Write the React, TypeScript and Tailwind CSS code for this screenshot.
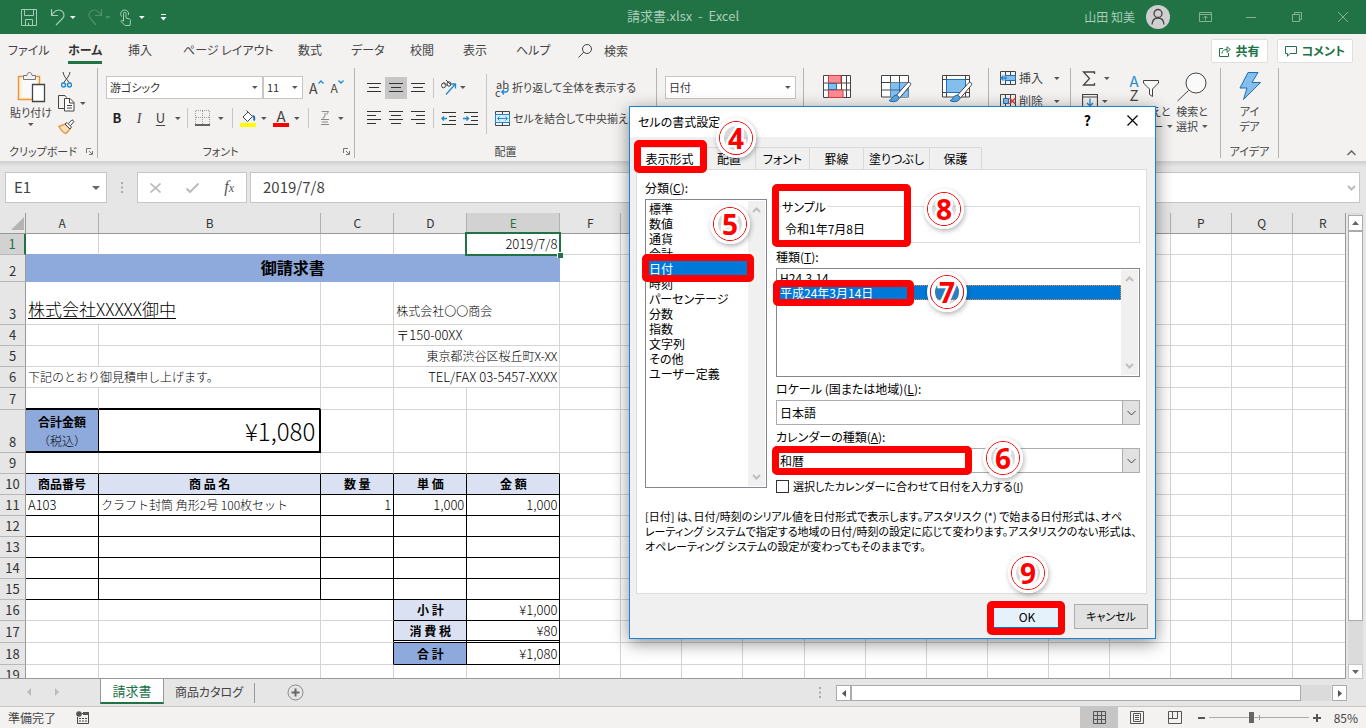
import { useState, type ReactNode } from 'react'
import clsx from 'clsx'

const MENU = [
  { label: 'ファイル', width: 'w-[60px]' },
  { label: 'ホーム', width: 'w-[60px]' },
  { label: '挿入', width: 'w-[55px]' },
  { label: 'ページ レイアウト', width: 'w-[115px]' },
  { label: '数式', width: 'w-[53px]' },
  { label: 'データ', width: 'w-[59px]' },
  { label: '校閲', width: 'w-[53px]' },
  { label: '表示', width: 'w-[53px]' },
  { label: 'ヘルプ', width: 'w-[62px]' },
]

const CATEGORIES = ['標準', '数値', '通貨', '会計', '日付', '時刻', 'パーセンテージ', '分数', '指数', '文字列', 'その他', 'ユーザー定義']

const DIALOG_TABS = [
  { label: '表示形式', width: 'w-[67px]' },
  { label: '配置', width: 'w-[53px]' },
  { label: 'フォント', width: 'w-[54px]' },
  { label: '罫線', width: 'w-[54px]' },
  { label: '塗りつぶし', width: 'w-[66px]' },
  { label: '保護', width: 'w-[52px]' },
]

function Icon({ w, h, children, className }: { w: number; h: number; children: ReactNode; className?: string }) {
  return (
    <svg width={w} height={h} viewBox={`0 0 ${w} ${h}`} fill="none" stroke="#444" aria-hidden="true" className={clsx('shrink-0', className)}>
      {children}
    </svg>
  )
}

function Caret({ className = 'text-[#555]' }: { className?: string }) {
  return (
    <Icon w={6} h={3} className={className}>
      <path d="M0 0h5.6L2.8 3z" fill="currentColor" stroke="none" />
    </Icon>
  )
}

/* ---------- Title bar ---------- */

function TitleBar() {
  return (
    <header className="grid h-[34px] shrink-0 grid-cols-[1fr_auto_1fr] items-center bg-[#217346] text-[13px] text-[#a9cdb8]">
      <div className="flex items-center pl-[21px]">
        <button aria-label="上書き保存">
          <Icon w={16} h={17}>
            <path d="M.5.5h15v16h-15zM3.5.5v6h9v-6M4.5 16.500v-6h7v6M7.500 16.500v-3" stroke="#a5cdb5" />
          </Icon>
        </button>
        <button aria-label="元に戻す" className="ml-[13px] flex items-center gap-1">
          <Icon w={16} h={18}>
            <path d="M1.500 1v6.500h6.500M1.500 7.500C4 3 8 1 11 2.500c4 2 3.500 6 1.500 8L6 17" stroke="#a5cdb5" strokeWidth="1.200" />
          </Icon>
          <Caret className="text-white" />
        </button>
        <button aria-label="やり直し" className="ml-[11px] flex items-center gap-[2px]">
          <Icon w={16} h={18}>
            <path d="M14.500 1v6.500H8M14.500 7.500C12 3 8 1 5 2.500 1 4.500 1.500 8.500 3.500 10.500L9 17" stroke="#4c9068" strokeWidth="1.200" />
          </Icon>
          <Caret className="text-[#4c9068]" />
        </button>
        <button aria-label="タッチ/マウス モード" className="ml-2 flex items-center gap-2">
          <Icon w={12} h={17}>
            <path d="M4.500 12V4.500a1.200 1.200 0 0 1 2.500 0V9l3.500 1c1 .3 1 1 1 2l-.5 4.500H6L2 12.500c-.5-1 .8-1.800 2.500 0M2.500 7.500A4 4 0 1 1 9.500 6" stroke="#a5cdb5" />
          </Icon>
          <Caret className="text-white" />
        </button>
        <button aria-label="クイック アクセス ツール バーのカスタマイズ" className="ml-[15px]">
          <Icon w={7} h={7}>
            <path d="M1 .5h5" stroke="#fff" />
            <path d="M.5 3h6l-3 3.500z" fill="#fff" stroke="none" />
          </Icon>
        </button>
      </div>
      <h1 className="whitespace-pre pb-[3px]">請求書.xlsx  -  Excel</h1>
      <div className="flex items-center justify-end pr-[18px]">
        <span className="mr-[11px] text-[12px]">山田 知美</span>
        <span className="mr-[29px] flex size-6 items-center justify-center rounded-full bg-[#cfcfcf]">
          <Icon w={16} h={18}>
            <circle cx="8" cy="5.500" r="4" strokeWidth="1.300" />
            <path d="M2 16.500c.3-4.500 3-6.500 6-6.500s5.700 2 6 6.500" strokeWidth="1.300" />
          </Icon>
        </span>
        <button aria-label="リボンの表示オプション" className="mr-[34px]">
          <Icon w={13} h={10}>
            <path d="M.5.5h12v9H.5zM.5 2.500h12M6.500 8.500V4M4.500 6l2-2 2 2" stroke="#7fb394" />
          </Icon>
        </button>
        <button aria-label="最小化" className="mr-9">
          <Icon w={10} h={10}>
            <path d="M0 5.500h10" stroke="#7fb394" />
          </Icon>
        </button>
        <button aria-label="元のサイズに戻す" className="mr-9">
          <Icon w={10} h={10}>
            <path d="M.5 2.500h7v7h-7zM2.500 2.500v-2h7v7h-2" stroke="#7fb394" />
          </Icon>
        </button>
        <button aria-label="閉じる">
          <Icon w={10} h={10}>
            <path d="M0 0l10 10M10 0L0 10" stroke="#7fb394" />
          </Icon>
        </button>
      </div>
    </header>
  )
}

function MenuBar() {
  return (
    <nav className="flex h-[34px] shrink-0 items-center bg-[#f3f2f1] pl-2 text-[12px] text-[#444]">
      {MENU.map(({ label, width }) => (
        <button key={label} className={clsx('flex h-[30px] shrink-0 items-center', width)}>
          <span className={clsx('flex h-[26px] items-center border-b-3 whitespace-nowrap', label === 'ホーム' ? 'border-[#217346] font-bold text-[#333]' : 'border-transparent')}>
            {label}
          </span>
        </button>
      ))}
      <button className="flex items-center gap-3 whitespace-nowrap">
        <Icon w={14} h={14}>
          <circle cx="9" cy="5" r="4.500" />
          <path d="M5.700 8.200L.5 13.500" />
        </Icon>
        検索
      </button>
      <div className="mr-[13px] ml-auto flex gap-[9px] font-bold text-[#217346]">
        <button className="flex h-6 items-center gap-[5px] rounded-xs border border-[#e1dfdd] bg-white px-[7px]">
          <Icon w={12} h={11}>
            <path d="M4 2.500H.5v8h9V7M3 7.500C3 4.500 5 3.500 8 3.500M8 .8v5.500l3.300-2.800z" stroke="#217346" />
          </Icon>
          共有
        </button>
        <button className="flex h-6 items-center gap-[5px] rounded-xs border border-[#e1dfdd] bg-white px-[7px]">
          <Icon w={12} h={11}>
            <path d="M.5.5h11v7H5l-2.500 2.800V7.500h-2z" stroke="#217346" />
          </Icon>
          コメント
        </button>
      </div>
    </nav>
  )
}

/* ---------- Ribbon ---------- */

function Group({ label, width, launcher, children }: { label: string; width: string; launcher?: boolean; children: ReactNode }) {
  return (
    <section className={clsx('flex h-[90px] shrink-0 flex-col border-r border-[#b5b3b1]', width)}>
      <div className="flex h-[77px]">{children}</div>
      <div className="flex h-[13px] items-center justify-center leading-[13px]">
        <span className="flex-1 text-center whitespace-nowrap">{label}</span>
        {launcher && (
          <button aria-label={`${label}の設定`} className="mr-1">
            <Icon w={7} h={7}>
              <path d="M.5 5V.5H5M3 3l3 3M6.500 3v3.500H3" stroke="#777" />
            </Icon>
          </button>
        )}
      </div>
    </section>
  )
}

function Divider({ className = 'h-5' }: { className?: string }) {
  return <span className={clsx('w-px shrink-0 bg-[#c8c6c4]', className)} />
}

function Lines({ rows, label, active }: { rows: [number, number][]; label: string; active?: boolean }) {
  return (
    <button aria-label={label} className={clsx('flex h-[22px] w-[22px] items-center justify-center', active && 'bg-[#c6c6c6]')}>
      <Icon w={14} h={14}>
        {rows.map(([x, len], i) => (
          <path key={i} d={`M${x} ${i * 4 + (rows.length === 3 ? 2.5 : 0.5)}h${len}`} stroke="#333" />
        ))}
      </Icon>
    </button>
  )
}

function Combo({ label, value, width }: { label: string; value: string; width: string }) {
  return (
    <span className={clsx('relative flex h-[23px] items-center border border-[#c8c6c4] bg-white', width)}>
      <select aria-label={label} className="h-full w-full appearance-none pl-[3px] text-[#333] outline-none">
        <option>{value}</option>
      </select>
      <Caret className="pointer-events-none absolute right-1 text-[#555]" />
    </span>
  )
}

function Indent({ out }: { out?: boolean }) {
  return (
    <Icon w={15} h={13}>
      <path d="M1 .5h14M8 4.500h7M8 8.500h7M1 12.500h14" stroke="#333" />
      <path d={out ? 'M6 6.500H1M3 4.500l-2 2 2 2' : 'M0 6.500h5M3.500 4.500l2 2-2 2'} stroke="#1f8ad2" strokeWidth="1.400" />
    </Icon>
  )
}

function Brush() {
  return (
    <>
      <path d="M28.500 7.500c1.500.3 1.500 1.800.5 3.200L18.500 23l-3-2.800L26 8.500c1-1 1.800-1.300 2.500-1z" fill="#fff" />
      <path d="M8 25.500c3-.3 3-5 7-5.500 3 1 4 3.500 1.500 5.500-2.500 1.800-6.500 1.500-8.500 0z" fill="#5aa7e0" stroke="#1f6fb5" />
    </>
  )
}

function Ribbon() {
  return (
    <div className="flex h-[93px] shrink-0 bg-[#f3f2f1] text-[11px] text-[#444]">
      <Group label="クリップボード" width="w-[98px]" launcher>
        <button className="flex w-[58px] flex-col items-center pt-1 pl-1">
          <Icon w={29} h={31}>
            <path d="M1.500 4.500h21v23h-21z" fill="#faf0d8" stroke="#e9963c" strokeWidth="1.500" />
            <path d="M5 5h15v20H5z" fill="#fafafa" stroke="none" />
            <path d="M6.500 7.500v-4h3.500c.3-2 1-3 2.500-3s2.200 1 2.500 3h3.500v4z" fill="#f3f2f1" stroke="#777" />
            <path d="M15.500 12.500h12v17h-12z" fill="#fff" stroke="#444" strokeWidth="1.300" />
          </Icon>
          <span className="mt-[2px] leading-[14px] whitespace-nowrap">貼り付け</span>
          <span className="mt-1"><Caret /></span>
        </button>
        <div className="flex flex-col items-start gap-[7px] pt-1">
          <button aria-label="切り取り" className="pl-[3px]">
            <Icon w={11} h={16}>
              <path d="M2 0c.5 4 3 6 6.500 11M9 0C8.500 4 6 6 2.500 11" />
              <circle cx="2.500" cy="13" r="2" stroke="#1f8ad2" strokeWidth="1.400" />
              <circle cx="8.500" cy="13" r="2" stroke="#1f8ad2" strokeWidth="1.400" />
            </Icon>
          </button>
          <button aria-label="コピー" className="flex items-center gap-[5px]">
            <Icon w={17} h={17}>
              <path d="M6 13.500H.5V.5H7l1.500 2" />
              <path d="M6.500 3.500h5.500l4 4v8.500H6.500z" fill="#fff" />
              <path d="M11.500 3.500V8H16M9 10.500h5M9 13h5" />
            </Icon>
            <Caret />
          </button>
          <button aria-label="書式のコピー/貼り付け">
            <Icon w={17} h={15}>
              <path d="M1 7.500l6-2.500 5 5-4 4.500c-2-.5-5-3-7-7z" fill="#fbe0c0" stroke="#e9963c" strokeWidth="1.400" />
              <path d="M7 5l2-1.500 4.500 4.500L12 10zM10.500 4.500L14 .8l2 1.700-3.500 4" fill="#fff" />
            </Icon>
          </button>
        </div>
      </Group>

      <Group label="フォント" width="w-[257px]" launcher>
        <div className="flex flex-col pt-2 pl-2">
          <div className="flex items-center">
            <Combo label="フォント" value="游ゴシック" width="w-[157px]" />
            <Combo label="フォント サイズ" value="11" width="w-10" />
            <button aria-label="フォント サイズの拡大" className="ml-[6px] flex text-[14px] leading-4">
              A
              <Icon w={6} h={4}><path d="M.5 3.500L3 1l2.500 2.500" stroke="#1f8ad2" strokeWidth="1.300" /></Icon>
            </button>
            <button aria-label="フォント サイズの縮小" className="ml-[7px] flex text-[12px] leading-4">
              A
              <Icon w={6} h={4}><path d="M.5.5L3 3 5.500.5" stroke="#1f8ad2" strokeWidth="1.300" /></Icon>
            </button>
          </div>
          <div className="mt-2 flex h-[22px] items-center text-[13px]">
            <button className="w-[22px] font-bold text-[#222]">B</button>
            <button className="w-[22px] font-['Liberation_Serif',serif] text-[14px] italic">I</button>
            <button className="w-[21px] underline underline-offset-2">U</button>
            <span className="flex w-[14px] justify-center"><Caret /></span>
            <span className="ml-[2px] flex"><Divider /></span>
            <button aria-label="罫線" className="ml-[7px]">
              <Icon w={15} h={16}>
                <path d="M.5 14V.5h14V14M7.500 1v13M1 7.500h14" stroke="#999" strokeDasharray="1 1" />
                <path d="M0 15h15" stroke="#333" strokeWidth="1.500" />
              </Icon>
            </button>
            <span className="ml-2"><Caret /></span>
            <span className="ml-2 flex"><Divider /></span>
            <button aria-label="塗りつぶしの色" className="ml-[7px]">
              <Icon w={16} h={17}>
                <path d="M3 7l5-5 4.500 4.500-5 5zM8 2L6.500.5" fill="#fff" />
                <path d="M12.500 6c2 0 2 2 1.500 4.500" stroke="#1d6fb8" strokeWidth="2" />
                <path d="M0 13h16v4H0z" fill="#ff0" stroke="none" />
              </Icon>
            </button>
            <span className="ml-[5px]"><Caret /></span>
            <button className="ml-[6px] flex w-4 flex-col items-center text-[15px] leading-[14px]">
              A
              <span className="h-1 w-4 bg-[#f00]" />
            </button>
            <span className="ml-[5px]"><Caret /></span>
            <span className="ml-2 flex"><Divider /></span>
            <button className="ml-2 flex w-4 flex-col items-center text-[9px] leading-[9px] text-[#777]">
              ア
              <Icon w={8} h={7}><path d="M0 .5h8M1 3h6M0 5.500h8" stroke="#888" /></Icon>
            </button>
            <span className="ml-[5px]"><Caret /></span>
          </div>
        </div>
      </Group>

      <Group label="配置" width="w-[302px]">
        <div className="flex flex-col gap-2 pt-2 pl-2">
          <div className="flex h-[23px] items-center">
            <Lines label="上揃え" rows={[[0, 14], [2, 10], [0, 14]]} />
            <Lines label="上下中央揃え" active rows={[[0, 14], [2, 10], [0, 14]]} />
            <Lines label="下揃え" rows={[[0, 14], [2, 10], [0, 14]]} />
            <span className="ml-1 flex"><Divider /></span>
            <button aria-label="方向" className="ml-[6px] flex items-center gap-[2px]">
              <Icon w={18} h={17}>
                <ellipse cx="3.500" cy="6.500" rx="2" ry="2.300" />
                <path d="M3.500 3l4 4M6 1l5 5" />
                <ellipse cx="9" cy="5" rx="2" ry="2.200" />
                <path d="M6 15.500L15 5.500M11 5h4.500v4.500" stroke="#1f8ad2" strokeWidth="1.300" />
              </Icon>
              <Caret />
            </button>
          </div>
          <div className="flex h-[22px] items-center">
            <Lines label="左揃え" rows={[[0, 14], [0, 9], [0, 14], [0, 9]]} />
            <Lines label="中央揃え" rows={[[0, 14], [2, 10], [0, 14], [2, 10]]} />
            <Lines label="右揃え" rows={[[0, 14], [5, 9], [0, 14], [5, 9]]} />
            <span className="ml-1 flex"><Divider /></span>
            <button aria-label="インデントを減らす" className="ml-[7px]"><Indent out /></button>
            <button aria-label="インデントを増やす" className="ml-[7px]"><Indent /></button>
          </div>
        </div>
        <span className="mt-[6px] ml-2 flex"><Divider className="h-[60px]" /></span>
        <div className="flex flex-col gap-2 pt-2 pl-2 whitespace-nowrap">
          <button className="flex h-[23px] items-center gap-[2px]">
            <span className="flex w-[15px] flex-col leading-[8px]">
              <span>ab</span>
              <span className="flex items-center">
                c
                <Icon w={8} h={7}><path d="M7 0v2.500L5.500 4H1M3 1.500L.8 4 3 6.500" stroke="#1f8ad2" strokeWidth="1.300" /></Icon>
              </span>
            </span>
            折り返して全体を表示する
          </button>
          <button className="flex h-[22px] items-center gap-[3px]">
            <Icon w={15} h={15}>
              <path d="M.5.5h14v14H.5zM7.500.5v3M7.500 11.500v3" />
              <path d="M.5 3.500h14v8H.5z" fill="#d6ebfb" stroke="#1f8ad2" />
              <path d="M3 7.500h9M4.500 5.500l-2 2 2 2M10.500 5.500l2 2-2 2" stroke="#1f8ad2" />
            </Icon>
            セルを結合して中央揃え
          </button>
        </div>
      </Group>

      <Group label="数値" width="w-[147px]">
        <div className="pt-2 pl-2">
          <Combo label="表示形式" value="日付" width="w-[131px]" />
        </div>
      </Group>

      <Group label="スタイル" width="w-[185px]">
        <div className="flex gap-[30px] pt-[7px] pl-[19px]">
          <button aria-label="条件付き書式" className="self-start">
            <Icon w={28} h={23}>
              <path d="M.5.500h27v22h-27zM.5 8h27M.5 15h27M5.500.5v22M18.500.5v22M23.500.5v22" fill="#fff" />
              <path d="M5.500.5h12.500v7.500H5.500zM5.500 15h14.500v7.500H5.500z" fill="#ff8c94" stroke="#d83b3b" />
              <path d="M5.500 8.500h8v6h-8z" fill="#83beec" stroke="#1f6fb5" />
            </Icon>
          </button>
          <button aria-label="テーブルとして書式設定" className="self-start">
            <Icon w={31} h={28}>
              <path d="M.5.500h27v21.500h-27zM.5 7.500h27M.5 15h27M9.500.5v21.500M18.500.5v21.500" fill="#fff" />
              <path d="M9.500 7.500h18v14.500h-18z" fill="#83beec" stroke="none" />
              <path d="M9.500 15h18M18.500 7.500v14.500" stroke="#1f6fb5" />
              <Brush />
            </Icon>
          </button>
          <button aria-label="セルのスタイル" className="self-start">
            <Icon w={31} h={28}>
              <path d="M.5.500h27v21.500h-27zM.5 4.500h27M.5 17.500h27M4.500.5v21.500M23.500.5v21.500" fill="#fff" />
              <path d="M4.500 4.500h19v13h-19z" fill="#83beec" stroke="#1f6fb5" />
              <Brush />
            </Icon>
          </button>
        </div>
      </Group>

      <Group label="セル" width="w-[82px]">
        <div className="flex flex-col gap-[7px] pt-[2px] pl-[11px] text-[12px]">
          <button className="flex h-4 items-center gap-[3px]">
            <Icon w={16} h={14}>
              <path d="M.5.5h15v13H.5zM5.500.5v13M10.500.5v13" />
              <path d="M5 4.500h10.500v5H5z" fill="#83beec" stroke="#1f6fb5" />
              <path d="M7 7H1M3.500 4.500L1 7l2.500 2.500" stroke="#1f8ad2" strokeWidth="1.500" />
            </Icon>
            挿入
            <span className="ml-2"><Caret /></span>
          </button>
          <button className="flex h-4 items-center gap-[3px]">
            <Icon w={16} h={14}>
              <path d="M.5.5h15v13H.5zM5.500.5v13M10.500.5v13" />
              <path d="M3.500 4.500h5v5h-5z" fill="#83beec" stroke="#1f6fb5" />
              <path d="M9.500 4l6 6M15.500 4l-6 6" stroke="#e03c3c" strokeWidth="1.500" />
            </Icon>
            削除
            <span className="ml-2"><Caret /></span>
          </button>
        </div>
      </Group>

      <Group label="編集" width="w-[150px]">
        <div className="flex flex-col gap-2 pt-[3px] pl-[11px]">
          <button aria-label="オート SUM" className="flex items-center gap-2">
            <Icon w={14} h={15}><path d="M12.500 3V1h-11l6 6.500-6 6.500h11v-2" strokeWidth="1.300" /></Icon>
            <Caret />
          </button>
          <button aria-label="フィル" className="flex items-center gap-1">
            <Icon w={16} h={14}>
              <path d="M.5.5h15v13H.5zM.5 3h15" strokeWidth="1.200" />
              <path d="M8 4.500V12M5 9l3 3 3-3" stroke="#1f8ad2" strokeWidth="1.300" />
            </Icon>
            <Caret />
          </button>
        </div>
        <button className="flex w-16 flex-col items-center pt-1 pl-1 leading-[15px] whitespace-nowrap">
          <span className="flex h-8 items-center gap-1">
            <span className="flex flex-col text-[15px] leading-[14px]"><span className="text-[#1f8ad2]">A</span><span>Z</span></span>
            <Icon w={16} h={17}><path d="M.5.5h15v2.500L9.500 9v7.500l-3-2V9L.5 3z" fill="#fafafa" /></Icon>
          </span>
          <span>並べ替えと</span>
          <span className="flex items-center gap-1">フィルター<Caret /></span>
        </button>
        <button className="flex w-9 flex-col items-center pt-1 leading-[15px] whitespace-nowrap">
          <Icon w={32} h={32}>
            <circle cx="20" cy="11" r="10" fill="#fafafa" />
            <path d="M12.500 18.500L1.500 29" />
          </Icon>
          <span>検索と</span>
          <span className="flex items-center gap-1">選択<Caret /></span>
        </button>
      </Group>

      <Group label="アイデア" width="w-[58px]">
        <button className="flex w-full flex-col items-center pt-1 leading-[15px]">
          <Icon w={22} h={32}>
            <path d="M9 .5h10l-6 10h8.500L4.500 27.500 8 16H1z" fill="#83beec" stroke="#1f6fb5" />
          </Icon>
          <span>アイ</span>
          <span>デア</span>
        </button>
      </Group>

      <button aria-label="リボンを折りたたむ" className="mr-[10px] mb-[5px] ml-auto self-end">
        <Icon w={9} h={6}><path d="M.5 5l4-4 4 4" stroke="#666" strokeWidth="1.500" /></Icon>
      </button>
    </div>
  )
}

function FormulaBar() {
  return (
    <div className="flex h-[52px] shrink-0 items-start bg-[#e6e6e6] bg-linear-to-b from-[#cfcfcf] to-[#e6e6e6] to-[6px] pt-[11px] pr-[6px] pl-[5px] text-[#444]">
      <div className="flex h-[31px] w-[102px] shrink-0 items-center border border-[#c6c6c6] bg-white pr-[6px] pl-2">
        <input aria-label="名前ボックス" defaultValue="E1" className="w-full min-w-0 text-[15px] outline-none" />
        <Icon w={8} h={4}><path d="M0 0h8L4 4z" fill="#666" stroke="none" /></Icon>
      </div>
      <Icon w={2} h={12} className="mt-[10px] ml-[14px]"><path d="M0 1h2M0 5.500h2M0 10h2" stroke="#aaa" strokeWidth="2" /></Icon>
      <div className="ml-[14px] flex h-[31px] w-[110px] shrink-0 items-center justify-between border border-[#c6c6c6] bg-white px-3">
        <button aria-label="キャンセル"><Icon w={11} h={10}><path d="M.5.5l10 9M10.500.5l-10 9" stroke="#bbb" strokeWidth="1.600" /></Icon></button>
        <button aria-label="入力"><Icon w={13} h={10}><path d="M.5 5.500L4 9 12.500.5" stroke="#bbb" strokeWidth="2" /></Icon></button>
        <button className="font-['Liberation_Serif',serif] text-[16px] leading-4 text-[#555] italic">f<span className="text-[12px]">x</span></button>
      </div>
      <div className="ml-[3px] flex h-[31px] flex-1 items-center border border-[#c6c6c6] bg-white pr-[3px] pl-3">
        <input aria-label="数式バー" defaultValue="2019/7/8" className="w-full min-w-0 text-[15px] outline-none" />
        <Icon w={9} h={6}><path d="M1 1l3.500 3.500L8 1" stroke="#bbb" strokeWidth="2" /></Icon>
      </div>
    </div>
  )
}

/* ---------- Sheet ---------- */

const COLUMNS = 'ABCDEFGHIJKLMNOPQR'.split('')
const ROW_HEIGHTS = ['h-[21px]', 'h-[27px]', 'h-[43px]', 'h-[21px]', 'h-[21px]', 'h-[21px]', 'h-[22px]', 'h-[43px]', ...Array(8).fill('h-[21px]'), 'h-[22px]', 'h-[22px]', 'h-[21px]']

const GRID = 'border-r-[#d4d4d4] border-b-[#d4d4d4]'
const BLACK = 'border-r-black border-b-black'
const HEAD = `${BLACK} bg-[#d9e1f2] text-center font-bold`
const NUM = `${BLACK} text-right text-[13px]`

type Cell = { text?: ReactNode; span?: number; cls?: string }

const blank = (n: number, cls = GRID): Cell[] => Array.from({ length: n }, () => ({ cls }))
const boxed = () => blank(5, BLACK)

// Cells A to E of each row; everything from F on is empty
const ROWS: Cell[][] = [
  [
    ...blank(4, 'border-r-[#d4d4d4] border-b-[#8ea9db]'),
    {
      cls: 'relative border-r-[#d4d4d4] border-b-[#8ea9db] text-right text-[13px]',
      text: (
        <>
          2019/7/8
          <span className="absolute -inset-x-[2px] -inset-y-[2px] border-2 border-[#217346]" />
          <span className="absolute -right-[4px] -bottom-[4px] size-[6px] border-t border-l border-white bg-[#217346]" />
        </>
      ),
    },
  ],
  [{ span: 5, cls: 'border-[#8ea9db] bg-[#8ea9db] pb-[3px] text-center text-[16px] font-bold', text: '御請求書' }],
  [
    { span: 2, cls: `${GRID} align-bottom text-[17px]`, text: <span className="mb-[5px] inline-block border-b border-black leading-[18px]">株式会社XXXXX御中</span> },
    ...blank(1),
    { span: 2, cls: `${GRID} align-bottom pb-[5px]`, text: '株式会社〇〇商会' },
  ],
  [...blank(3), { span: 2, cls: `${GRID} text-[13px]`, text: '〒150-00XX' }],
  [...blank(3), { span: 2, cls: `${GRID} text-right`, text: '東京都渋谷区桜丘町X-XX' }],
  [{ span: 2, cls: GRID, text: '下記のとおり御見積申し上げます。' }, ...blank(1), { span: 2, cls: `${GRID} text-right text-[13px]`, text: 'TEL/FAX 03-5457-XXXX' }],
  [...blank(2, 'border-r-[#d4d4d4] border-b-2 border-b-black'), ...blank(3)],
  [
    {
      cls: 'border-r-black border-b-2 border-b-black bg-[#8ea9db] text-center leading-[19px]',
      text: (
        <>
          <span className="font-bold">合計金額</span>
          <br />
          （税込）
        </>
      ),
    },
    { cls: 'border-r-2 border-b-2 border-black pr-1 text-right text-2xl', text: '¥1,080' },
    ...blank(3),
  ],
  blank(5, 'border-r-[#d4d4d4] border-b-black'),
  ['商品番号', '商 品 名', '数 量', '単 価', '金 額'].map((text) => ({ text, cls: HEAD })),
  [
    { text: 'A103', cls: `${BLACK} text-[13px]` },
    { text: 'クラフト封筒 角形2号 100枚セット', cls: BLACK },
    { text: '1', cls: NUM },
    { text: '1,000', cls: NUM },
    { text: '1,000', cls: NUM },
  ],
  boxed(),
  boxed(),
  boxed(),
  boxed(),
  [...blank(2), { cls: 'border-r-black border-b-[#d4d4d4]' }, { text: '小 計', cls: HEAD }, { text: '¥1,000', cls: NUM }],
  [
    ...blank(2),
    { cls: 'border-r-black border-b-[#d4d4d4]' },
    { text: '消 費 税', cls: 'border-r-black border-b-3 border-b-black [border-bottom-style:double] bg-[#d9e1f2] bg-clip-padding text-center font-bold' },
    { text: '¥80', cls: 'border-r-black border-b-3 border-b-black [border-bottom-style:double] text-right text-[13px]' },
  ],
  [...blank(2), { cls: 'border-r-black border-b-[#d4d4d4]' }, { text: '合 計', cls: `${BLACK} bg-[#8ea9db] text-center font-bold` }, { text: '¥1,080', cls: NUM }],
  blank(5),
]

function Sheet() {
  return (
    <div className="flex min-h-0 flex-1 bg-[#e6e6e6]">
      <div className="min-w-0 flex-1 overflow-hidden border-r border-b border-[#999] bg-white">
        <table className="w-[1354px] table-fixed border-separate border-spacing-0 text-[12px] font-light text-black">
          <colgroup>
            <col className="w-[26px]" />
            <col className="w-[73px]" />
            <col className="w-[222px]" />
            <col className="w-[73px]" />
            <col className="w-[73px]" />
            <col className="w-[93px]" />
            {COLUMNS.slice(5).map((c) => <col key={c} className="w-[61px]" />)}
          </colgroup>
          <thead>
            <tr className="h-[21px] bg-[#e6e6e6] text-[12px] text-[#333]">
              <th className="border-r border-b border-[#999] p-0 leading-none">
                <Icon w={13} h={13} className="ml-[9px] inline-block"><path d="M13 0v13H0z" fill="#b4b4b4" stroke="none" /></Icon>
              </th>
              {COLUMNS.map((c) => (
                <th key={c} scope="col" className={clsx('border-r border-b border-r-[#b0b0b0] border-b-[#999] p-0 pb-px leading-4 font-normal', c === 'E' && 'bg-[#d2d2d2] text-[#217346]')}>
                  {c}
                </th>
              ))}
            </tr>
          </thead>
          <tbody>
            {ROWS.map((cells, i) => (
              <tr key={i} className={ROW_HEIGHTS[i]}>
                <th
                  scope="row"
                  className={clsx(
                    'border-r border-b border-b-[#b8b8b8] p-0 align-bottom text-[13px] leading-5 font-normal',
                    i === 0 ? 'border-r-2 border-r-[#217346] bg-[#d2d2d2] text-[#217346]' : 'border-r-[#999] bg-[#e6e6e6] text-[#333]',
                  )}
                >
                  {i + 1}
                </th>
                {cells.map((cell, j) => (
                  <td key={j} colSpan={cell.span} className={clsx('border-r border-b px-[2px] py-0 leading-4 whitespace-nowrap', cell.cls)}>
                    {cell.text}
                  </td>
                ))}
                {COLUMNS.slice(5).map((c) => (
                  <td key={c} className="border-r border-b border-[#d4d4d4] p-0" />
                ))}
              </tr>
            ))}
          </tbody>
        </table>
      </div>
      <div className="mr-[3px] ml-[2px] flex w-[15px] shrink-0 flex-col bg-[#dbdbdb]">
        <button aria-label="上へスクロール" className="mt-[2px] flex h-4 items-center justify-center border border-[#ababab] bg-white">
          <Icon w={7} h={4}><path d="M0 4h7L3.500 0z" fill="#666" stroke="none" /></Icon>
        </button>
        <div className="h-[390px] min-h-0 border border-[#ababab] bg-white" />
        <button aria-label="下へスクロール" className="mt-auto flex h-[15px] shrink-0 items-center justify-center border border-[#c6c6c6] bg-white">
          <Icon w={7} h={4}><path d="M0 0h7L3.500 4z" fill="#666" stroke="none" /></Icon>
        </button>
      </div>
    </div>
  )
}

function SheetTabs() {
  return (
    <div className="flex h-[27px] shrink-0 items-start bg-[#e6e6e6] text-[13px] text-[#444]">
      <div className="flex h-[25px] w-[100px] items-center gap-6 pl-[27px]">
        <button aria-label="前のシート"><Icon w={4} h={8}><path d="M4 0v8L0 4z" fill="#bbb" stroke="none" /></Icon></button>
        <button aria-label="次のシート"><Icon w={4} h={8}><path d="M0 0v8l4-4z" fill="#bbb" stroke="none" /></Icon></button>
      </div>
      <button className="h-[25px] w-[64px] border-r border-b-2 border-l border-x-[#999] border-b-[#217346] bg-white text-[#217346]">請求書</button>
      <button className="h-[25px] w-[90px] text-[12px] whitespace-nowrap">商品カタログ</button>
      <span className="mt-1 h-5 w-px bg-[#999]" />
      <button aria-label="新しいシート" className="mt-[5px] ml-8">
        <Icon w={17} h={17}>
          <circle cx="8.500" cy="8.500" r="7.500" stroke="#888" />
          <path d="M8.500 4.500v8M4.500 8.500h8" stroke="#666" strokeWidth="2" />
        </Icon>
      </button>
      <div className="mr-[19px] ml-auto flex items-center pt-[6px]">
        <Icon w={2} h={12} className="mr-[15px]"><path d="M0 1h2M0 5.500h2M0 10h2" stroke="#aaa" strokeWidth="2" /></Icon>
        <button aria-label="左へスクロール" className="flex h-4 w-[15px] items-center justify-center border border-[#ababab] bg-white">
          <Icon w={4} h={7}><path d="M4 0v7L0 3.500z" fill="#555" stroke="none" /></Icon>
        </button>
        <div className="flex h-4 w-[480px] bg-[#dbdbdb]">
          <div className="w-[450px] border border-[#ababab] bg-white" />
        </div>
        <button aria-label="右へスクロール" className="ml-[1px] flex h-4 w-[15px] items-center justify-center border border-[#ababab] bg-white">
          <Icon w={4} h={7}><path d="M0 0v7l4-3.500z" fill="#555" stroke="none" /></Icon>
        </button>
      </div>
    </div>
  )
}

function StatusBar() {
  return (
    <footer className="flex h-[22px] shrink-0 items-center border-t border-[#c6c6c6] bg-[#f3f2f1] pl-2 text-[12px] text-[#444]">
      <span>準備完了</span>
      <button aria-label="マクロの記録" className="ml-5">
        <Icon w={13} h={13}>
          <path d="M6 2.500h6.500v10h-11V6" />
          <path d="M7 1h6v3H7z" fill="#555" stroke="none" />
          <path d="M3 7.500h8M3 10h8" strokeDasharray="2 1" />
          <circle cx="3" cy="3" r="2.800" fill="#555" stroke="none" />
        </Icon>
      </button>
      <div className="ml-auto flex h-full items-center">
        <button aria-label="標準" className="flex h-full w-[38px] items-center justify-center bg-[#c6c6c6]">
          <Icon w={13} h={13}><path d="M.5.5h12v12H.5zM.5 4.500h12M.5 8.500h12M4.500.5v12M8.500.5v12" stroke="#555" /></Icon>
        </button>
        <button aria-label="ページ レイアウト" className="flex w-[38px] justify-center">
          <Icon w={14} h={13}><path d="M.5.5h13v12H.5zM3.500 2.500h7v8h-7zM5 4.500h4M5 6.500h4M5 8.500h4" stroke="#555" /></Icon>
        </button>
        <button aria-label="改ページ プレビュー" className="flex w-[38px] justify-center">
          <Icon w={14} h={13}><path d="M.5.5h13v12H.5zM4.500.5v7M9.500.5v7M.5 7.500h9" stroke="#555" /></Icon>
        </button>
        <button aria-label="縮小" className="ml-1"><Icon w={7} h={8}><path d="M0 4h7" stroke="#555" strokeWidth="2" /></Icon></button>
        <span className="relative mx-1 flex h-4 items-center">
          <span className="absolute left-1/2 h-[5px] w-px bg-[#999]" />
          <input
            type="range"
            aria-label="ズーム"
            defaultValue={42}
            className="relative h-4 w-[100px] appearance-none bg-linear-to-b from-[#aaa] to-[#aaa] bg-[length:100%_1px] bg-center bg-no-repeat [&::-webkit-slider-thumb]:h-[11px] [&::-webkit-slider-thumb]:w-[5px] [&::-webkit-slider-thumb]:appearance-none [&::-webkit-slider-thumb]:bg-[#666]"
          />
        </span>
        <button aria-label="拡大"><Icon w={8} h={8}><path d="M0 4h8M4 0v8" stroke="#555" strokeWidth="2" /></Icon></button>
        <span className="w-[45px] pr-2 text-right">85%</span>
      </div>
    </footer>
  )
}

/* ---------- Format cells dialog ---------- */

function ListScroll() {
  return (
    <div className="flex w-[17px] shrink-0 flex-col items-center justify-between bg-[#f0f0f0] py-[6px]">
      <Icon w={9} h={6}><path d="M1 5l3.500-3.500L8 5" stroke="#bfbfbf" strokeWidth="2" /></Icon>
      <Icon w={9} h={6}><path d="M1 1l3.500 3.500L8 1" stroke="#bfbfbf" strokeWidth="2" /></Icon>
    </div>
  )
}

function DialogSelect({ id, value }: { id: string; value: string }) {
  return (
    <div className="relative flex h-[25px] border border-[#adadad] bg-white">
      <select id={id} className="w-full appearance-none pl-[3px] outline-none">
        <option>{value}</option>
      </select>
      <span className="pointer-events-none absolute -inset-y-px -right-px flex w-[18px] items-center justify-center border border-[#adadad] bg-[#e1e1e1]">
        <Icon w={9} h={6}><path d="M.5 1l4 4 4-4" /></Icon>
      </span>
    </div>
  )
}

function Badge({ n, className }: { n: number; className: string }) {
  return (
    <div className={clsx('absolute size-10 rounded-full border-3 border-white shadow-[1px_2px_5px_rgba(0,0,0,0.3)]', className)}>
      <div className="size-full rounded-full border border-[#f00] bg-white/20">
        <div className="flex size-full items-center justify-center rounded-full border-4 border-white bg-black/15 font-['Noto_Sans',sans-serif] text-[28px] leading-none font-bold text-[#f00] [paint-order:stroke_fill] [-webkit-text-stroke:5px_white]">
          {n}
        </div>
      </div>
    </div>
  )
}

function Mark({ className }: { className: string }) {
  return <div className={clsx('pointer-events-none absolute rounded-[5px] border-7 border-[#f00]', className)} />
}

function FormatDialog() {
  const [category, setCategory] = useState('日付')

  return (
    <div
      role="dialog"
      aria-label="セルの書式設定"
      className="absolute top-[106px] left-[629px] w-[527px] border border-[#1883d7] bg-[#f0f0f0] text-[12px] leading-[15px] text-black shadow-[0_4px_16px_rgba(0,0,0,0.45)]"
    >
      <div className="flex h-[30px] items-center bg-white pl-2">
        <h2 className="pb-[2px]">セルの書式設定</h2>
        <button className="mr-9 ml-auto pb-1 text-[14px] font-bold">?</button>
        <button aria-label="閉じる" className="mr-[17px] pb-[3px]">
          <Icon w={11} h={11}><path d="M.5.5l10 10M10.500.5l-10 10" stroke="#000" strokeWidth="1.200" /></Icon>
        </button>
      </div>

      <div className="px-[6px] pt-[10px] pr-2">
        <div role="tablist" className="flex">
          {DIALOG_TABS.map(({ label, width }, i) => (
            <button
              key={label}
              role="tab"
              aria-selected={i === 0}
              className={clsx('h-[22px] border-t border-r border-[#d9d9d9] pb-px whitespace-nowrap', width, i === 0 && 'border-l bg-white')}
            >
              {label}
            </button>
          ))}
        </div>

        <div className="h-[425px] border border-[#dcdcdc] bg-white pt-[10px] pr-[6px] pl-2">
          <div className="flex gap-[9px]">
            <div className="w-[122px] shrink-0">
              <span id="category-label" className="block h-[19px]">分類(<u>C</u>):</span>
              <div className="flex h-[289px] border border-[#828790] p-px">
                <ul role="listbox" aria-labelledby="category-label" className="flex-1">
                  {CATEGORIES.map((name) => (
                    <li
                      key={name}
                      role="option"
                      aria-selected={name === category}
                      onClick={() => setCategory(name)}
                      className={clsx('h-[15px] cursor-default pl-[2px] whitespace-nowrap', name === category && 'bg-[#0078d7] text-white')}
                    >
                      {name}
                    </li>
                  ))}
                </ul>
                <ListScroll />
              </div>
            </div>

            <div className="flex min-w-0 flex-1 flex-col">
              <fieldset className="mt-[19px] h-[44px] border border-[#dcdcdc] pl-2">
                <legend className="-ml-[3px] pr-px">サンプル</legend>
                <output className="mt-[7px] block">令和1年7月8日</output>
              </fieldset>
              <span id="type-label" className="mt-[6px] mb-[4px]">種類(<u>T</u>):</span>
              <div className="flex h-[109px] border border-[#828790] p-px">
                <ul role="listbox" aria-labelledby="type-label" className="flex-1">
                  <li role="option" aria-selected="false" className="h-[15px] pl-[2px]">H24.3.14</li>
                  <li role="option" aria-selected="true" className="h-[15px] border border-dotted border-[#ff8728] bg-[#0078d7] pl-px leading-[13px] text-white">平成24年3月14日</li>
                </ul>
                <ListScroll />
              </div>
              <label htmlFor="locale" className="mt-[4px] mb-[4px]">ロケール (国または地域)(<u>L</u>):</label>
              <DialogSelect id="locale" value="日本語" />
              <label htmlFor="calendar" className="mt-[4px] mb-[4px]">カレンダーの種類(<u>A</u>):</label>
              <DialogSelect id="calendar" value="和暦" />
              <label className="mt-[6px] flex items-center gap-1 text-[11px] whitespace-nowrap">
                <input type="checkbox" className="size-[13px] appearance-none border border-[#333] bg-white" />
                <span>選択したカレンダーに合わせて日付を入力する(<u>I</u>)</span>
              </label>
            </div>
          </div>

          <p className="mt-[15px] text-[11px] whitespace-nowrap">
            [日付] は、日付/時刻のシリアル値を日付形式で表示します。アスタリスク (*) で始まる日付形式は、オペ
            <br />
            レーティング システムで指定する地域の日付/時刻の設定に応じて変わります。アスタリスクのない形式は、
            <br />
            オペレーティング システムの設定が変わってもそのままです。
          </p>
        </div>
      </div>

      <div className="flex justify-end gap-[10px] pt-[10px] pr-[7px] pb-[9px]">
        <button className="h-[25px] w-[74px] border-2 border-[#0078d7] bg-[#e5f1fb]">OK</button>
        <button className="h-[25px] w-[74px] border border-[#adadad] bg-[#e1e1e1] text-[11px]">キャンセル</button>
      </div>

      <Mark className="top-[33px] left-[4px] h-[33px] w-[73px]" />
      <Mark className="top-[147px] left-[12px] h-[28px] w-[112px]" />
      <Mark className="top-[77px] left-[142px] h-[63px] w-[139px]" />
      <Mark className="top-[173px] left-[143px] h-[26px] w-[141px]" />
      <Mark className="top-[339px] left-[142px] h-[29px] w-[200px]" />
      <Mark className="top-[494px] left-[357px] h-[34px] w-[78px]" />

      <Badge n={4} className="top-[11px] left-[86px]" />
      <Badge n={5} className="top-[97px] left-[80px]" />
      <Badge n={8} className="top-[82px] left-[294px]" />
      <Badge n={7} className="top-[165px] left-[297px]" />
      <Badge n={6} className="top-[331px] left-[353px]" />
      <Badge n={9} className="top-[446px] left-[378px]" />
    </div>
  )
}

export default function App() {
  return (
    <div lang="ja" className="relative flex h-screen flex-col overflow-hidden bg-[#e6e6e6] font-['Noto_Sans_CJK_JP',sans-serif]">
      <div className="contents [font-feature-settings:'palt']">
        <TitleBar />
        <MenuBar />
        <Ribbon />
        <FormulaBar />
      </div>
      <Sheet />
      <div className="contents [font-feature-settings:'palt']">
        <SheetTabs />
        <StatusBar />
        <FormatDialog />
      </div>
    </div>
  )
}
